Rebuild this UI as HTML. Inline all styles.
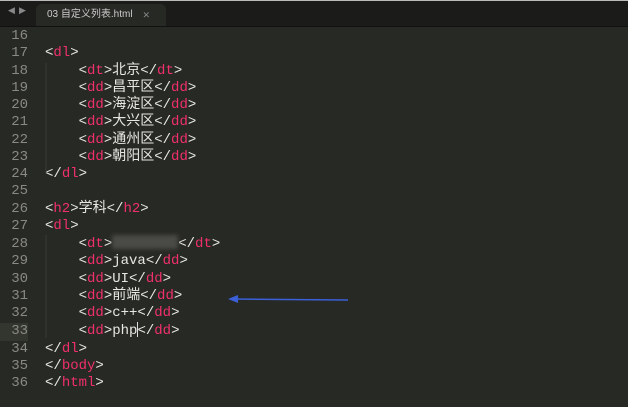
<!DOCTYPE html>
<html><head><meta charset="utf-8"><style>
html,body{margin:0;padding:0;width:628px;height:407px;overflow:hidden;background:#272925;}
.top{position:absolute;left:0;top:0;width:628px;height:1px;background:#bbb;}
.bar{position:absolute;left:0;top:1px;width:628px;height:25px;background:#1b1c1a;border-bottom:1px solid #111;}
.arr{position:absolute;top:6px;color:#888;font-size:9px;font-family:"DejaVu Sans",sans-serif;}
.tab{position:absolute;left:36px;top:4px;width:130px;height:22px;background:#272925;border-radius:6px 6px 0 0;color:#ccc;font:10px "Liberation Sans","Noto Sans CJK SC",sans-serif;line-height:22px;padding-left:11px;box-sizing:border-box;}
.tab .x{position:absolute;right:16px;top:0;color:#888;font-size:9px;}
.code{position:absolute;left:0;top:28px;font:14px/17.25px "Liberation Mono","Noto Sans CJK SC",monospace;color:#e8e8e2;white-space:pre;}
.ln{display:inline-block;width:28px;text-align:right;color:#8a8a84;margin-right:17px;}
.t{color:#f0306a;}
.hl{background:#33352f;}
.blur{display:inline-block;width:66px;height:14px;background:#4a4a46;vertical-align:-2px;filter:blur(2px);}
.cur{display:inline-block;width:1px;height:15px;background:#ddd;vertical-align:-3px;margin-right:-1px;}
</style></head><body>
<div class="top"></div>
<div class="bar"></div>
<span class="arr" style="left:8px">◀</span><span class="arr" style="left:19px">▶</span>
<div class="tab">03 自定义列表.html<span class="x">✕</span></div>
<div class="code"><span class="ln">16</span>
<span class="ln">17</span>&lt;<span class="t">dl</span>&gt;
<span class="ln">18</span>    &lt;<span class="t">dt</span>&gt;北京&lt;/<span class="t">dt</span>&gt;
<span class="ln">19</span>    &lt;<span class="t">dd</span>&gt;昌平区&lt;/<span class="t">dd</span>&gt;
<span class="ln">20</span>    &lt;<span class="t">dd</span>&gt;海淀区&lt;/<span class="t">dd</span>&gt;
<span class="ln">21</span>    &lt;<span class="t">dd</span>&gt;大兴区&lt;/<span class="t">dd</span>&gt;
<span class="ln">22</span>    &lt;<span class="t">dd</span>&gt;通州区&lt;/<span class="t">dd</span>&gt;
<span class="ln">23</span>    &lt;<span class="t">dd</span>&gt;朝阳区&lt;/<span class="t">dd</span>&gt;
<span class="ln">24</span>&lt;/<span class="t">dl</span>&gt;
<span class="ln">25</span>
<span class="ln">26</span>&lt;<span class="t">h2</span>&gt;学科&lt;/<span class="t">h2</span>&gt;
<span class="ln">27</span>&lt;<span class="t">dl</span>&gt;
<span class="ln">28</span>    &lt;<span class="t">dt</span>&gt;<span class="blur"></span>&lt;/<span class="t">dt</span>&gt;
<span class="ln">29</span>    &lt;<span class="t">dd</span>&gt;java&lt;/<span class="t">dd</span>&gt;
<span class="ln">30</span>    &lt;<span class="t">dd</span>&gt;UI&lt;/<span class="t">dd</span>&gt;
<span class="ln">31</span>    &lt;<span class="t">dd</span>&gt;前端&lt;/<span class="t">dd</span>&gt;
<span class="ln">32</span>    &lt;<span class="t">dd</span>&gt;c++&lt;/<span class="t">dd</span>&gt;
<span class="ln hl">33</span>    &lt;<span class="t">dd</span>&gt;php<span class="cur"></span>&lt;/<span class="t">dd</span>&gt;
<span class="ln">34</span>&lt;/<span class="t">dl</span>&gt;
<span class="ln">35</span>&lt;/<span class="t">body</span>&gt;
<span class="ln">36</span>&lt;/<span class="t">html</span>&gt;</div>
<svg style="position:absolute;left:0;top:0" width="628" height="407">
<line x1="46" y1="63" x2="46" y2="174" stroke="#3a3c36" stroke-width="1"/>
<line x1="46" y1="235" x2="46" y2="338" stroke="#3a3c36" stroke-width="1"/>
<path d="M232 299 L348 300" stroke="#3a5fd8" stroke-width="1.5"/>
<path d="M228 299 L238 295 L238 303 Z" fill="#3a5fd8"/>
</svg>
</body></html>
